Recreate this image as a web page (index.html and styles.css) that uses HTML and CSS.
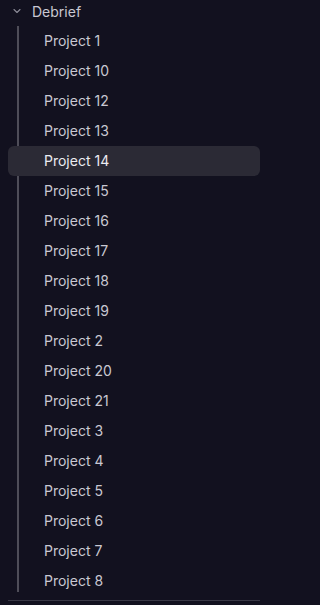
FILE: index.html
```html
<!DOCTYPE html>
<html>
<head>
<meta charset="utf-8">
<link rel="stylesheet" href="styles.css">
</head>
<body>
<div class="tree">
  <div class="folder">
    <svg class="chev" width="8" height="6" viewBox="0 0 8 6"><path d="M1 1.5 L4 4.5 L7 1.5" fill="none" stroke="#8a8a96" stroke-width="1.1" stroke-linecap="round" stroke-linejoin="round"/></svg>
    <span class="folder-name">Debrief</span>
  </div>
  <div class="children">
    <div class="item">Project 1</div>
    <div class="item">Project 10</div>
    <div class="item">Project 12</div>
    <div class="item">Project 13</div>
    <div class="item active">Project 14</div>
    <div class="item">Project 15</div>
    <div class="item">Project 16</div>
    <div class="item">Project 17</div>
    <div class="item">Project 18</div>
    <div class="item">Project 19</div>
    <div class="item">Project 2</div>
    <div class="item">Project 20</div>
    <div class="item">Project 21</div>
    <div class="item">Project 3</div>
    <div class="item">Project 4</div>
    <div class="item">Project 5</div>
    <div class="item">Project 6</div>
    <div class="item">Project 7</div>
    <div class="item">Project 8</div>
  </div>
  <div class="divider"></div>
</div>
</body>
</html>
```
FILE: styles.css
```css
html, body {
  margin: 0;
  padding: 0;
  background: #12111f;
}
body {
  font-family: Inter, "Noto Sans", sans-serif;
  font-size: 14px;
  color: #c9c8d2;
  width: 275px;
  height: 605px;
  overflow: hidden;
}
.folder {
  height: 22px;
  display: flex;
  align-items: center;
  padding-left: 13px;
  gap: 11px;
}
.chev {
  display: block;
}
.folder-name {
  color: #c9c8d2;
}
.children {
  margin: 4px 15px 0 8px;
  background: linear-gradient(#4e4d58, #4e4d58) no-repeat 9px 0 / 2px calc(100% - 4px);
}
.item {
  height: 30px;
  line-height: 30px;
  padding-left: 36px;
  border-radius: 6px;
}
.item.active {
  background: #2b2a35;
  color: #ececf1;
}
.divider {
  margin: 4px 15px 0 8px;
  border-top: 1px solid #393845;
}
```
